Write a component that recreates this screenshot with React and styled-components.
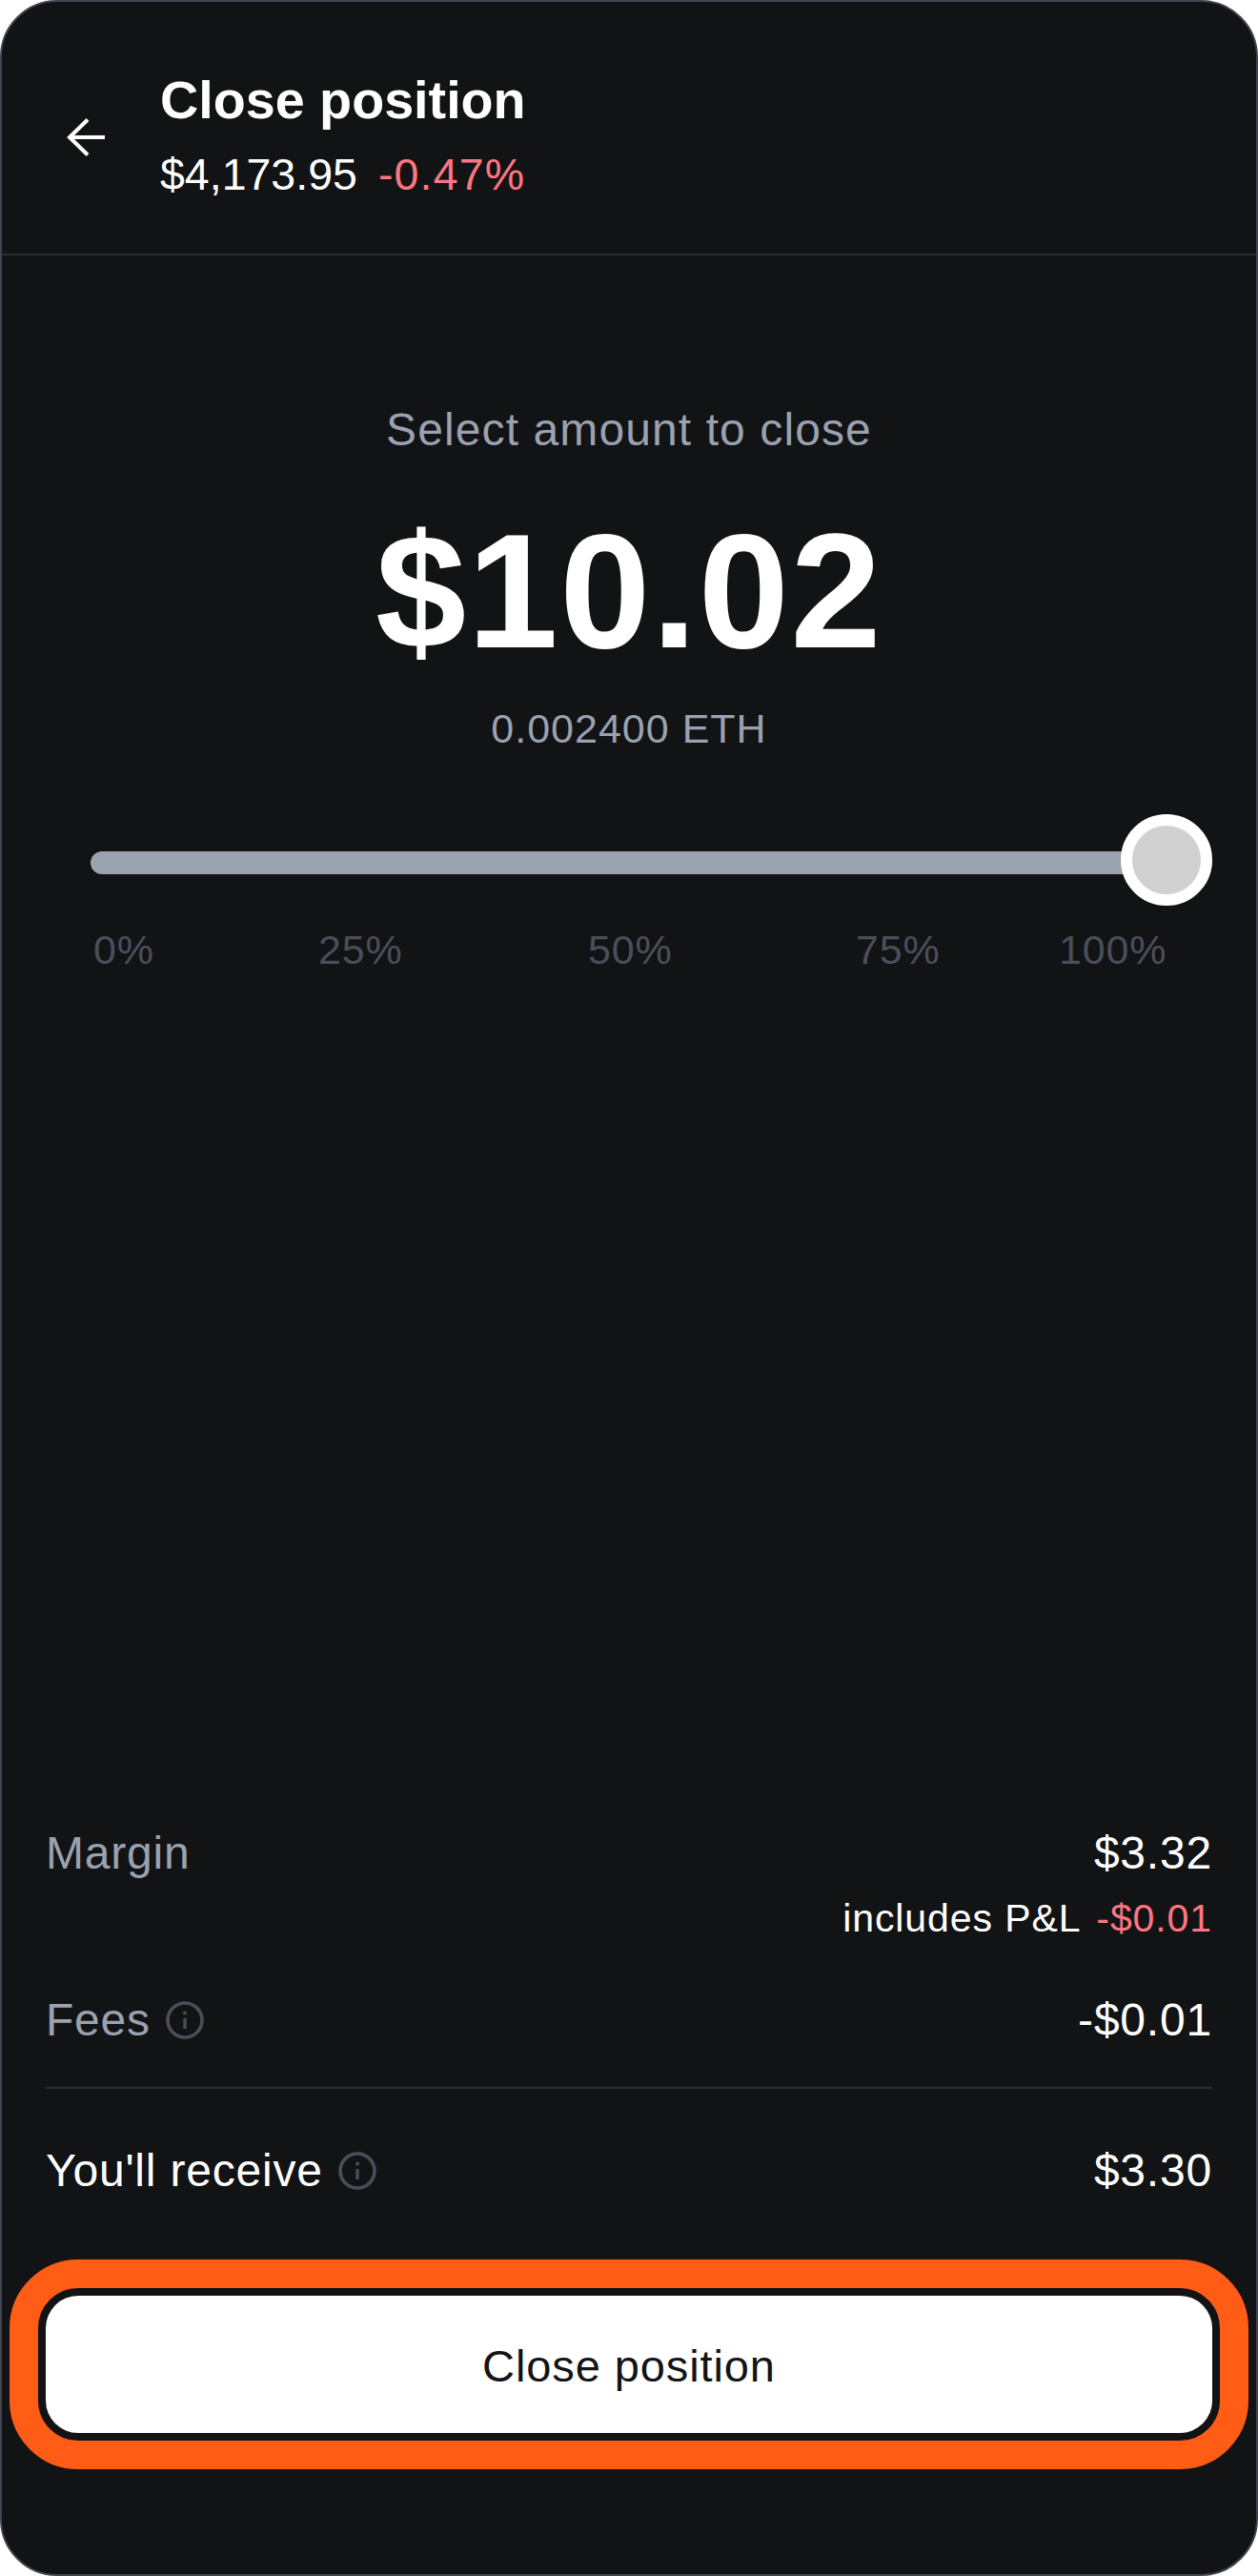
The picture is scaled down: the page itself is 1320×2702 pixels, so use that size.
import React from 'react';
import styled, { createGlobalStyle } from 'styled-components';

const GlobalStyle = createGlobalStyle`
  html, body {
    margin: 0;
    padding: 0;
    background: #fff;
  }
  * {
    box-sizing: border-box;
  }
  body {
    font-family: "Liberation Sans", Arial, sans-serif;
  }
`;

const Frame = styled.div`
  width: 1320px;
  height: 2702px;
  display: flex;
  flex-direction: column;
  background: #121315;
  border: 2px solid #3f4450;
  border-radius: 60px;
  overflow: hidden;
`;

const Header = styled.header`
  height: 266px;
  flex: none;
  display: flex;
  align-items: flex-start;
  gap: 58px;
  padding: 71px 0 0 68px;
  border-bottom: 2px solid #2a2c30;
`;

const BackButton = styled.button`
  width: 40px;
  height: 40px;
  flex: none;
  margin-top: 51px;
  padding: 0;
  border: 0;
  background: none;
  color: #fff;
  display: block;
`;

const TitleBlock = styled.div`
  display: flex;
  flex-direction: column;
  gap: 18px;
`;

const Title = styled.h1`
  margin: 0;
  font-size: 55.7px;
  line-height: 64px;
  font-weight: 700;
  color: #fff;
`;

const PriceLine = styled.div`
  display: flex;
  gap: 22px;
  font-size: 46.5px;
  line-height: 56px;
  color: #fff;
`;

const Negative = styled.span`
  color: #ff7582;
`;

const PriceChange = styled(Negative)`
  letter-spacing: 1.2px;
`;

const AmountSection = styled.section`
  display: flex;
  flex-direction: column;
  align-items: center;
  padding-top: 155px;
`;

const Prompt = styled.div`
  font-size: 48px;
  line-height: 56px;
  letter-spacing: 1.1px;
  color: #9aa1af;
`;

const Amount = styled.div`
  margin-top: 51px;
  font-size: 171px;
  line-height: 180px;
  font-weight: 700;
  letter-spacing: 1.5px;
  color: #fff;
`;

const TokenAmount = styled.div`
  margin-top: 29px;
  font-size: 43px;
  line-height: 50px;
  letter-spacing: 1px;
  color: #9aa1af;
`;

const SliderSection = styled.section`
  padding: 104px 46px 0 93px;
`;

const Track = styled.div`
  position: relative;
  height: 24px;
  border-radius: 12px;
  background: #9aa1af;
`;

const Thumb = styled.div`
  position: absolute;
  right: 0;
  top: -39px;
  width: 96px;
  height: 96px;
  border-radius: 50%;
  border: 12px solid #fff;
  background: #d1d1d1;
`;

const Ticks = styled.div`
  display: grid;
  grid-template-columns: 236px 283px 281px 213px auto;
  margin: 54px 0 0 3px;
  font-size: 43px;
  line-height: 50px;
  letter-spacing: 0.8px;
  color: #4a4e5a;
`;

const Details = styled.section`
  margin-top: auto;
  padding: 0 46px;
  display: flex;
  flex-direction: column;
`;

const Row = styled.div`
  display: flex;
  justify-content: space-between;
  align-items: flex-start;
  margin-top: ${(p) => p.$top || 0}px;
`;

const Label = styled.div`
  display: flex;
  align-items: center;
  gap: 16px;
  font-size: 48px;
  line-height: 56px;
  letter-spacing: 0.8px;
  color: ${(p) => (p.$strong ? '#fff' : '#9aa1af')};
`;

const InfoIcon = styled.svg`
  width: 40px;
  height: 40px;
  flex: none;
  color: #4a4e5a;
`;

const Values = styled.div`
  display: flex;
  flex-direction: column;
  align-items: flex-end;
  gap: 16px;
`;

const Value = styled.div`
  font-size: 48px;
  line-height: 56px;
  letter-spacing: 0.8px;
  color: #fff;
`;

const SubValue = styled.div`
  display: flex;
  gap: 16px;
  font-size: 41px;
  line-height: 48px;
  letter-spacing: 0.9px;
  color: #fff;
`;

const Divider = styled.div`
  height: 2px;
  margin-top: 42px;
  background: #2c2d30;
`;

const Highlight = styled.div`
  margin: 65px 8px 110px;
  padding: 8px;
  border: 30px solid #ff5c16;
  border-radius: 72px;
`;

const CloseButton = styled.button`
  display: block;
  width: 100%;
  height: 144px;
  padding: 2px 0 0;
  border: 0;
  border-radius: 34px;
  background: #fff;
  color: #131416;
  font-family: inherit;
  font-size: 47px;
  letter-spacing: 0.9px;
`;

const Info = () => (
  <InfoIcon viewBox="0 0 40 40" fill="none" stroke="currentColor">
    <circle cx="20" cy="20" r="18" strokeWidth="3.6" />
    <path d="M20 18v11" strokeWidth="3.4" />
    <circle cx="20" cy="12.5" r="2" fill="currentColor" stroke="none" />
  </InfoIcon>
);

export default function App() {
  return (
    <>
      <GlobalStyle />
      <Frame>
        <Header>
          <BackButton aria-label="Back">
            <svg width="40" height="40" viewBox="0 0 40 40" fill="none" stroke="currentColor" strokeWidth="4">
              <path d="M40 20H3" />
              <path d="M22 1.5 3 20l19 18.5" />
            </svg>
          </BackButton>
          <TitleBlock>
            <Title>Close position</Title>
            <PriceLine>
              <span>$4,173.95</span>
              <PriceChange>-0.47%</PriceChange>
            </PriceLine>
          </TitleBlock>
        </Header>

        <AmountSection>
          <Prompt>Select amount to close</Prompt>
          <Amount>$10.02</Amount>
          <TokenAmount>0.002400 ETH</TokenAmount>
        </AmountSection>

        <SliderSection>
          <Track>
            <Thumb />
          </Track>
          <Ticks>
            <span>0%</span>
            <span>25%</span>
            <span>50%</span>
            <span>75%</span>
            <span>100%</span>
          </Ticks>
        </SliderSection>

        <Details>
          <Row>
            <Label>Margin</Label>
            <Values>
              <Value>$3.32</Value>
              <SubValue>
                <span>includes P&amp;L</span>
                <Negative>-$0.01</Negative>
              </SubValue>
            </Values>
          </Row>
          <Row $top={55}>
            <Label>
              Fees
              <Info />
            </Label>
            <Value>-$0.01</Value>
          </Row>
          <Divider />
          <Row $top={58}>
            <Label $strong>
              You'll receive
              <Info />
            </Label>
            <Value>$3.30</Value>
          </Row>
        </Details>

        <Highlight>
          <CloseButton>Close position</CloseButton>
        </Highlight>
      </Frame>
    </>
  );
}
